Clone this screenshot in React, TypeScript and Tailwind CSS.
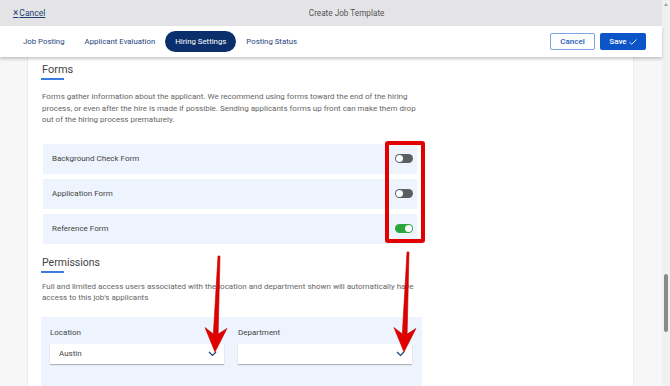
import React from "react";

const Toggle = ({ on }: { on: boolean }) => (
  <div
    className={`relative w-[18px] h-[9px] rounded-full ${on ? "bg-[#2aa63c]" : "bg-[#5b5e63]"}`}
  >
    <div
      className={`absolute top-[1px] w-[7px] h-[7px] rounded-full bg-white ${on ? "right-[1px]" : "left-[1px]"}`}
    />
  </div>
);

const Chevron = () => (
  <svg width="9" height="6" viewBox="0 0 9 6" fill="none">
    <path d="M1 1l3.5 3.5L8 1" stroke="#1f3f78" strokeWidth="1.2" />
  </svg>
);

const Arrow = ({ x1, y1, x2, y2 }: { x1: number; y1: number; x2: number; y2: number }) => {
  const dx = x2 - x1;
  const dy = y2 - y1;
  const len = Math.sqrt(dx * dx + dy * dy);
  const ux = dx / len;
  const uy = dy / len;
  const px = -uy;
  const py = ux;
  const hb = 24;
  const hw = 11;
  const bx = x2 - ux * hb;
  const by = y2 - uy * hb;
  const nx = x2 - ux * (hb - 6);
  const ny = y2 - uy * (hb - 6);
  const pts = [
    [x1 + px * 1, y1 + py * 1],
    [nx + px * 2.4, ny + py * 2.4],
    [bx + px * hw, by + py * hw],
    [x2, y2],
    [bx - px * hw, by - py * hw],
    [nx - px * 2.4, ny - py * 2.4],
    [x1 - px * 1, y1 - py * 1],
  ]
    .map((p) => p.join(","))
    .join(" ");
  return <polygon points={pts} fill="#e00000" stroke="#c00000" strokeWidth="0.6" />;
};

export default function App() {
  const font = { fontFamily: "Roboto, 'Liberation Sans', sans-serif" };
  return (
    <div className="relative w-[670px] h-[386px] overflow-hidden flex bg-white" style={font}>
      <div className="flex flex-col w-[662px] h-full">
        {/* top bar */}
        <div className="h-[26px] bg-[#e4e4e6] flex items-center pl-[13px] pr-[16px] shrink-0">
          <a className="text-[8.5px] text-[#1c3d72] underline flex items-center">
            <span className="mr-[1px] text-[10px] leading-none">×</span>Cancel
          </a>
          <div className="flex-1 text-center text-[8.2px] text-[#555] pl-[2px]">Create Job Template</div>
        </div>
        {/* tab bar */}
        <div className="h-[31px] bg-white flex items-center pl-[13px] pr-[16px] shrink-0 relative z-10 shadow-[0_2px_3px_rgba(0,0,0,0.22)]">
          <div className="flex items-center text-[7.8px] text-[#1f4580]">
            <div className="px-[10px] h-[21px] flex items-center">Job Posting</div>
            <div className="px-[10px] h-[21px] flex items-center">Applicant Evaluation</div>
            <div className="px-[10px] h-[21px] flex items-center rounded-full bg-[#0b2f6c] text-white">
              Hiring Settings
            </div>
            <div className="px-[10px] h-[21px] flex items-center">Posting Status</div>
          </div>
          <div className="flex-1" />
          <div className="flex gap-[5px]">
            <button className="w-[45px] h-[17px] border border-[#79a3e3] rounded-[2px] text-[8px] text-[#1f5bb8] font-medium bg-white">
              Cancel
            </button>
            <button className="w-[46px] h-[17px] rounded-[2px] text-[8px] text-white font-medium bg-[#0b55c8] flex items-center justify-center gap-[2px]">
              Save
              <svg width="8" height="6" viewBox="0 0 8 6" fill="none">
                <path d="M0.5 3.2L2.7 5.2L7.5 0.6" stroke="white" strokeWidth="0.9" />
              </svg>
            </button>
          </div>
        </div>
        {/* body */}
        <div className="flex flex-1 min-h-0">
          <div className="w-[28px] bg-[#f7f7f7] border-r border-[#ececec] shrink-0" />
          <div className="w-[605px] bg-white pl-[13px] shrink-0">
            <div className="pt-[6px] pl-[1px] text-[11px] leading-[14px] text-[#444]">Forms</div>
            <div className="mt-[1px] w-[23px] h-[2px] bg-[#3b7ddd]" />
            <p className="mt-[11px] pl-[1px] w-[380px] text-[8px] leading-[11.6px] text-[#666]">
              Forms gather information about the applicant. We recommend using forms toward the end of the hiring
              process, or even after the hire is made if possible. Sending applicants forms up front can make them drop
              out of the hiring process prematurely.
            </p>
            <div className="mt-[18px] ml-[2px] w-[374px] flex flex-col gap-[5px]">
              {[
                ["Background Check Form", false],
                ["Application Form", false],
                ["Reference Form", true],
              ].map(([label, on]) => (
                <div
                  key={label as string}
                  className="h-[30px] bg-[#eef4fd] flex items-center justify-between pl-[9px] pr-[4px] text-[8px] text-[#444]"
                >
                  <span>{label as string}</span>
                  <Toggle on={on as boolean} />
                </div>
              ))}
            </div>
            <div className="mt-[12px] pl-[1px] text-[10.5px] leading-[14px] text-[#444]">Permissions</div>
            <div className="mt-[1px] w-[23px] h-[2px] bg-[#3b7ddd]" />
            <p className="mt-[8px] pl-[1px] w-[382px] text-[8px] leading-[11.6px] text-[#666]">
              Full and limited access users associated with the location and department shown will automatically have
              access to this job's applicants
            </p>
            <div className="mt-[13px] w-[381px] h-[70px] bg-[#eef4fd] pl-[9px] pt-[10px] flex gap-[14px]">
              <div className="flex flex-col">
                <span className="text-[8px] leading-[11px] text-[#444]">Location</span>
                <div className="mt-[6px] w-[174px] h-[20px] bg-white shadow-[0_1px_1px_rgba(0,0,0,0.25)] flex items-center justify-between pl-[9px] pr-[7px] text-[8px] text-[#444]">
                  <span>Austin</span>
                  <Chevron />
                </div>
              </div>
              <div className="flex flex-col">
                <span className="text-[8px] leading-[11px] text-[#444]">Department</span>
                <div className="mt-[6px] w-[174px] h-[20px] bg-white shadow-[0_1px_1px_rgba(0,0,0,0.25)] flex items-center justify-end pl-[9px] pr-[7px]">
                  <Chevron />
                </div>
              </div>
            </div>
          </div>
          <div className="flex-1 bg-[#f7f7f7] border-l border-[#ececec]" />
        </div>
      </div>
      {/* scrollbar */}
      <div className="w-[8px] h-full bg-[#f1f1f1] relative">
        <div className="absolute top-[3px] left-[1.5px] w-0 h-0 border-l-[2.5px] border-r-[2.5px] border-b-[3px] border-l-transparent border-r-transparent border-b-[#a0a0a0]" />
        <div className="absolute top-[274px] left-[2px] w-[4px] h-[58px] rounded-full bg-[#8a8a8a]" />
      </div>
      {/* annotations */}
      <div className="absolute left-[385px] top-[141px] w-[40px] h-[102px] border-[4px] border-[#e30000] rounded-[3px]" />
      <svg className="absolute left-0 top-0 pointer-events-none" width="670" height="386">
        <Arrow x1={219} y1={256} x2={215} y2={352} />
        <Arrow x1={408} y1={252} x2={404} y2={352} />
      </svg>
    </div>
  );
}
